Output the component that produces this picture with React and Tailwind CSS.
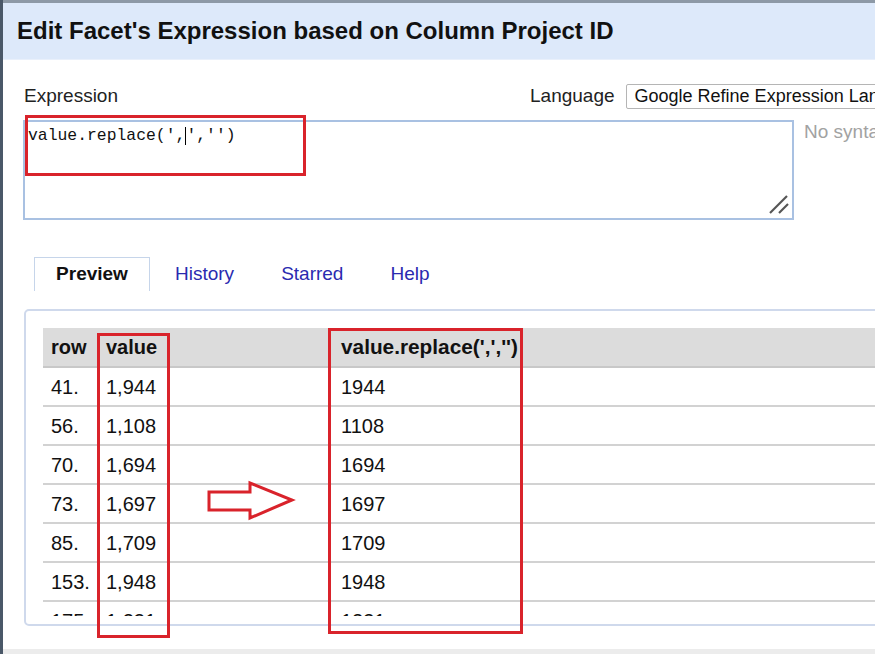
import React from "react";

const rows = [
  ["41.", "1,944", "1944"],
  ["56.", "1,108", "1108"],
  ["70.", "1,694", "1694"],
  ["73.", "1,697", "1697"],
  ["85.", "1,709", "1709"],
  ["153.", "1,948", "1948"],
  ["175.", "1,231", "1231"],
];

export default function App() {
  return (
    <div className="relative w-[875px] h-[654px] overflow-hidden bg-white flex flex-col border-l-[3px] border-[#4a5868] font-['Liberation_Sans',Arial,sans-serif] text-[#111]">
      {/* top frame line */}
      <div className="h-[3px] bg-[#8d99a6] shrink-0" />
      {/* header */}
      <div className="h-[57px] shrink-0 bg-[#dde9fa] flex items-center pl-[14px] border-b border-[#e9f0fb]">
        <h1 className="text-[24px] font-bold text-[#111] whitespace-nowrap">
          Edit Facet's Expression based on Column Project ID
        </h1>
      </div>

      {/* body */}
      <div className="flex-1 flex flex-col pl-[21px] min-h-0">
        {/* expression / language row */}
        <div className="mt-[24px] h-[25px] flex items-center whitespace-nowrap">
          <div className="w-[506px] shrink-0 text-[19px] text-[#222]">Expression</div>
          <div className="shrink-0 text-[19px] text-[#222]">Language</div>
          <div className="ml-[11px] h-[25px] w-[280px] shrink-0 border border-[#b5b5b5] rounded-[2px] flex items-center pl-[8px] text-[18px] text-[#111] bg-white">
            Google Refine Expression Language (GREL)
          </div>
        </div>

        {/* textarea row */}
        <div className="mt-[11px] flex items-start">
          <div className="relative -ml-px w-[771px] h-[100px] shrink-0 border-2 border-[#a9c1e2] bg-white pl-[3px] pt-[3px]">
            <div className="font-['Liberation_Mono',monospace] text-[16.4px] leading-[22px] text-[#111] whitespace-nowrap flex items-center">
              <span>value.replace(',</span>
              <span className="inline-block w-px h-[18px] bg-black" />
              <span>','')</span>
            </div>
            <svg className="absolute right-[3px] bottom-[3px]" width="22" height="22" viewBox="0 0 22 22">
              <line x1="20" y1="3" x2="3" y2="20" stroke="#555" strokeWidth="2.2" />
              <line x1="21" y1="11" x2="12" y2="20" stroke="#555" strokeWidth="2.2" />
            </svg>
          </div>
          <div className="ml-[10px] -mt-[2px] text-[19px] text-[#a2a2a2] whitespace-nowrap">No syntax error.</div>
        </div>

        {/* tabs */}
        <div className="mt-[37px] h-[34px] flex items-stretch pl-[10px] whitespace-nowrap">
          <div className="w-[116px] border border-b-0 border-[#c6d5ea] flex items-center justify-center text-[19px] font-bold text-[#111] bg-white">
            Preview
          </div>
          <div className="ml-[25px] flex items-center text-[19px] text-[#2a2ab0]">History</div>
          <div className="ml-[47px] flex items-center text-[19px] text-[#2a2ab0]">Starred</div>
          <div className="ml-[47px] flex items-center text-[19px] text-[#2a2ab0]">Help</div>
        </div>

        {/* preview panel */}
        <div className="mt-[18px] h-[317px] w-[900px] shrink-0 border-2 border-[#cfd9ec] rounded-[5px] pt-[17px] pl-[17px] pb-[8px]">
          <div className="h-[288px] overflow-hidden text-[20px] text-[#111]">
            <div className="flex h-[38px] items-center bg-[#dcdcdc] border-b-2 border-[#c8c8c8] font-bold box-content">
              <div className="w-[55px] pl-[8px]">row</div>
              <div className="w-[233px] pl-[8px]">value</div>
              <div className="pl-[10px] text-[20.8px]">value.replace(',','')</div>
            </div>
            {rows.map((r) => (
              <div key={r[0]} className="flex h-[37px] items-center border-b-2 border-[#d2d2d2] box-content">
                <div className="w-[55px] pl-[8px]">{r[0]}</div>
                <div className="w-[233px] pl-[8px]">{r[1]}</div>
                <div className="pl-[10px]">{r[2]}</div>
              </div>
            ))}
          </div>
        </div>
      </div>

      {/* bottom band */}
      <div className="h-[5px] shrink-0 bg-[#ececec]" />

      {/* red annotations (overlay) */}
      <div className="absolute left-[22px] top-[115px] w-[281px] h-[61px] border-[3px] border-[#d9232b]" />
      <div className="absolute left-[94px] top-[333px] w-[73px] h-[305px] border-[3px] border-[#d9232b]" />
      <div className="absolute left-[325px] top-[328px] w-[195px] h-[306px] border-[3px] border-[#d9232b]" />
      <svg className="absolute left-[200px] top-[480px]" width="94" height="42" viewBox="0 0 94 42">
        <polygon
          points="6,12 47,12 47,3 89,20 47,38 47,30 6,30"
          fill="white"
          stroke="#d9232b"
          strokeWidth="3"
        />
      </svg>
    </div>
  );
}
